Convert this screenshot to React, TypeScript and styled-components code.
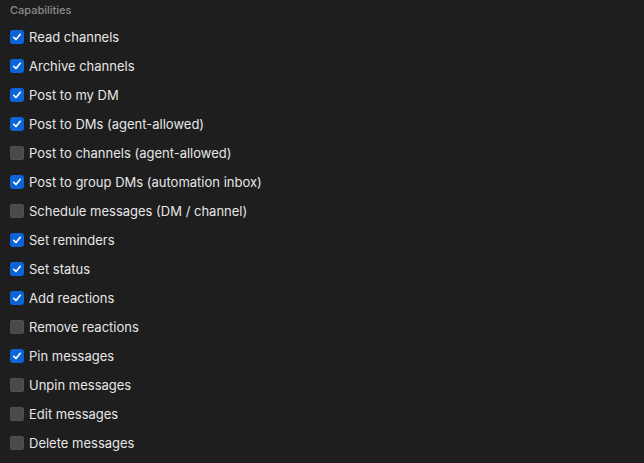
import React from 'react';
import styled, { createGlobalStyle } from 'styled-components';

type Capability = {
  label: string;
  enabled: boolean;
};

const capabilities: Capability[] = [
  { label: 'Read channels', enabled: true },
  { label: 'Archive channels', enabled: true },
  { label: 'Post to my DM', enabled: true },
  { label: 'Post to DMs (agent-allowed)', enabled: true },
  { label: 'Post to channels (agent-allowed)', enabled: false },
  { label: 'Post to group DMs (automation inbox)', enabled: true },
  { label: 'Schedule messages (DM / channel)', enabled: false },
  { label: 'Set reminders', enabled: true },
  { label: 'Set status', enabled: true },
  { label: 'Add reactions', enabled: true },
  { label: 'Remove reactions', enabled: false },
  { label: 'Pin messages', enabled: true },
  { label: 'Unpin messages', enabled: false },
  { label: 'Edit messages', enabled: false },
  { label: 'Delete messages', enabled: false },
];

const GlobalStyle = createGlobalStyle`
  html, body {
    margin: 0;
    padding: 0;
    background: #1e1e1e;
  }
  body {
    font-family: Inter, "Liberation Sans", sans-serif;
    -webkit-font-smoothing: antialiased;
  }
`;

const Panel = styled.section`
  display: flex;
  flex-direction: column;
  width: 644px;
  height: 463px;
  box-sizing: border-box;
  padding: 2px 10px 0;
  background: #1e1e1e;
  overflow: hidden;
`;

const Heading = styled.h3`
  margin: 0 0 4px;
  height: 16px;
  line-height: 16px;
  font-size: 11px;
  font-weight: 500;
  color: #8b8b8b;
`;

const List = styled.div`
  display: flex;
  flex-direction: column;
`;

const Row = styled.label`
  display: flex;
  align-items: center;
  gap: 5px;
  height: 29px;
  cursor: default;
`;

type BoxProps = {
  $checked: boolean;
};

const Box = styled.span<BoxProps>`
  display: flex;
  align-items: center;
  justify-content: center;
  width: 14px;
  height: 14px;
  border-radius: 3px;
  box-sizing: border-box;
  background: ${(props) => (props.$checked ? '#0b64d8' : '#4a4a4a')};
  box-shadow: ${(props) => (props.$checked ? 'none' : 'inset 0 0 0 0.5px #555')};
  flex-shrink: 0;
`;

const Label = styled.span`
  font-size: 13px;
  color: #e6e6e6;
`;

const Check = () => (
  <svg width="10" height="10" viewBox="0 0 10 10" fill="none">
    <path
      d="M1.8 5.3 L4 7.5 L8.3 2.3"
      stroke="#fff"
      strokeWidth="1.7"
      strokeLinecap="round"
      strokeLinejoin="round"
    />
  </svg>
);

const App = () => (
  <>
    <GlobalStyle />
    <Panel>
      <Heading>Capabilities</Heading>
      <List>
        {capabilities.map((cap) => (
          <Row key={cap.label}>
            <Box $checked={cap.enabled}>{cap.enabled && <Check />}</Box>
            <Label>{cap.label}</Label>
          </Row>
        ))}
      </List>
    </Panel>
  </>
);

export default App;
